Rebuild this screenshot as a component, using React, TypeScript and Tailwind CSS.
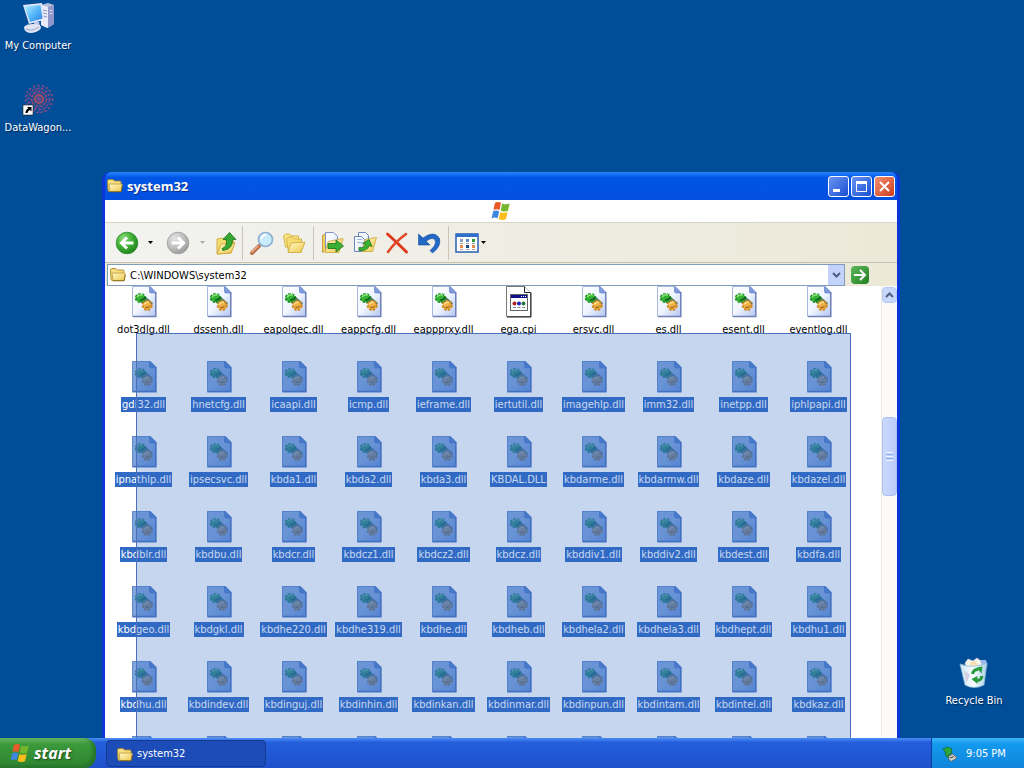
import type { ReactNode } from 'react'

type FileEntry = { name: string; kind?: 'dll' | 'cpi' }

const TOP_ROW: FileEntry[] = [
  { name: 'dot3dlg.dll' },
  { name: 'dssenh.dll' },
  { name: 'eapolqec.dll' },
  { name: 'eappcfg.dll' },
  { name: 'eappprxy.dll' },
  { name: 'ega.cpi', kind: 'cpi' },
  { name: 'ersvc.dll' },
  { name: 'es.dll' },
  { name: 'esent.dll' },
  { name: 'eventlog.dll' },
]

const SELECTED = [
  'gdi32.dll', 'hnetcfg.dll', 'icaapi.dll', 'icmp.dll', 'ieframe.dll', 'iertutil.dll', 'imagehlp.dll', 'imm32.dll', 'inetpp.dll', 'iphlpapi.dll',
  'ipnathlp.dll', 'ipsecsvc.dll', 'kbda1.dll', 'kbda2.dll', 'kbda3.dll', 'KBDAL.DLL', 'kbdarme.dll', 'kbdarmw.dll', 'kbdaze.dll', 'kbdazel.dll',
  'kbdblr.dll', 'kbdbu.dll', 'kbdcr.dll', 'kbdcz1.dll', 'kbdcz2.dll', 'kbdcz.dll', 'kbddiv1.dll', 'kbddiv2.dll', 'kbdest.dll', 'kbdfa.dll',
  'kbdgeo.dll', 'kbdgkl.dll', 'kbdhe220.dll', 'kbdhe319.dll', 'kbdhe.dll', 'kbdheb.dll', 'kbdhela2.dll', 'kbdhela3.dll', 'kbdhept.dll', 'kbdhu1.dll',
  'kbdhu.dll', 'kbdindev.dll', 'kbdinguj.dll', 'kbdinhin.dll', 'kbdinkan.dll', 'kbdinmar.dll', 'kbdinpun.dll', 'kbdintam.dll', 'kbdintel.dll', 'kbdkaz.dll',
]

const COLUMNS = 10

/* ---------- shared gradients ---------- */

function Gradients() {
  return (
    <svg width="0" height="0" className="absolute" aria-hidden="true">
      <defs>
        <linearGradient id="page" x1="0" y1="0" x2="1" y2="1">
          <stop offset="0" stopColor="#ffffff" />
          <stop offset="0.5" stopColor="#f0f5ff" />
          <stop offset="1" stopColor="#b4c6f2" />
        </linearGradient>
        <linearGradient id="folder" x1="0" y1="0" x2="1" y2="1">
          <stop offset="0" stopColor="#fffbc8" />
          <stop offset="1" stopColor="#edc64c" />
        </linearGradient>
        <radialGradient id="green" cx="0.35" cy="0.3" r="0.8">
          <stop offset="0" stopColor="#8fdc7c" />
          <stop offset="0.5" stopColor="#3fae34" />
          <stop offset="1" stopColor="#1d7d1c" />
        </radialGradient>
        <radialGradient id="gray" cx="0.35" cy="0.3" r="0.8">
          <stop offset="0" stopColor="#e4e4e4" />
          <stop offset="0.6" stopColor="#b9b9b9" />
          <stop offset="1" stopColor="#929292" />
        </radialGradient>
        <linearGradient id="screen" x1="0" y1="0" x2="1" y2="1">
          <stop offset="0" stopColor="#b8f0ff" />
          <stop offset="0.5" stopColor="#58b8fa" />
          <stop offset="1" stopColor="#2a80e4" />
        </linearGradient>
        <linearGradient id="bin" x1="0" y1="0" x2="1" y2="0">
          <stop offset="0" stopColor="#c9e6f4" />
          <stop offset="0.5" stopColor="#fbfdff" />
          <stop offset="1" stopColor="#a9cfea" />
        </linearGradient>
      </defs>
    </svg>
  )
}

/* ---------- icons ---------- */

function DllIcon({ selected = false }: { selected?: boolean }) {
  return (
    <svg viewBox="0 0 32 32" className="size-8 shrink-0" aria-hidden="true">
      <path d="M4.500 0.500h18l5 5v25h-23z" fill="url(#page)" stroke="#a9b8e0" />
      <path d="M27.800 6v24.500H5" fill="none" stroke="#6f80b6" strokeWidth="1.500" />
      <path d="M21.500 0.500l6.500 6.500h-5q-1.500 0-1.500-1.500z" fill="#7d9ade" stroke="#5c78be" strokeWidth="0.600" />
      <g>
        <path d="M9 10l9 1 7 6-3 4-9-4z" fill="#1d4a22" opacity="0.700" />
        <ellipse cx="12.500" cy="12" rx="4.800" ry="4" fill="#35b235" stroke="#1f9427" strokeWidth="2" strokeDasharray="2.400 1.200" />
        <path d="M9 11q2-3 6-2" fill="none" stroke="#90e67b" strokeWidth="1.500" />
        <path d="M12 14q4 0 5-3" fill="none" stroke="#135d1c" strokeWidth="1.500" />
        <circle cx="19.200" cy="19.500" r="4.400" fill="#f0b048" stroke="#d08c24" strokeWidth="2.200" strokeDasharray="2.400 1.300" />
        <path d="M16 18.500q2-3 5-2" fill="none" stroke="#ffe28a" strokeWidth="1.500" />
        <path d="M17.500 21q2 1.500 4-1" fill="none" stroke="#9a6418" strokeWidth="1.200" />
      </g>
      {selected && <path d="M4 0h18.500l6 6v25.500H4z" fill="#316ac5" fillOpacity="0.600" />}
    </svg>
  )
}

function CpiIcon() {
  return (
    <svg viewBox="0 0 32 32" className="size-8 shrink-0" aria-hidden="true">
      <path d="M3.500 0.500h18l6 6v24h-24z" fill="#fff" stroke="#777" />
      <path d="M28 6.500v24.500H4" fill="none" stroke="#222" />
      <path d="M21.500 0.500v6h6" fill="#fff" stroke="#222" />
      <rect x="7.500" y="8.500" width="17" height="16" fill="#fff" stroke="#666" />
      <rect x="8" y="9" width="16" height="3" fill="#10108c" />
      <path d="M18 10.500h1M20 10.500h1M22 10.500h1" stroke="#fff" />
      <circle cx="11.500" cy="17.500" r="2" fill="#b02020" />
      <circle cx="16" cy="17.500" r="2" fill="#2020b8" />
      <circle cx="20.500" cy="17.500" r="2" fill="#207840" />
      <path d="M10 21.500h12" stroke="#888" strokeDasharray="3 1.500" />
    </svg>
  )
}

function FolderIcon({ className = 'size-4' }: { className?: string }) {
  return (
    <svg viewBox="0 0 16 16" className={`${className} shrink-0`} aria-hidden="true">
      <path d="M0.500 3.500q0-2 1.500-2h4l1.500 1.500h5.500q1 0 1 1V12q0 1.500-1 1.500H2.500Q1 13.500 1 12z" fill="#f7df80" stroke="#a8872a" strokeWidth="0.900" />
      <path d="M2 6h12.500l.8.800-1.300 6.700H3z" fill="url(#folder)" stroke="#b8973a" strokeWidth="0.800" />
      <path d="M2.800 13.800h11.400l1.100-6" fill="none" stroke="#7c6110" strokeWidth="0.800" />
    </svg>
  )
}

function WindowsFlag({ className = 'size-5' }: { className?: string }) {
  return (
    <svg viewBox="0 0 20 20" className={`${className} shrink-0`} aria-hidden="true">
      <path d="M4 1.800Q6.700 0 10 1.800L8.500 9Q5.500 7.400 2.400 9z" fill="#ea5a29" />
      <path d="M11.200 2.400q3.300 1.700 7.500.200L17 9.800q-4 1.500-7.300-.300z" fill="#76b82c" />
      <path d="M2.100 10.300q3.100-1.700 6.100 0L6.600 17.300Q3.700 15.900.6 17.400z" fill="#3f86e0" />
      <path d="M9.400 10.900q3.300 1.700 7.300.200L15 18.200q-4 1.500-7.300-.300z" fill="#fbbd1c" />
    </svg>
  )
}

function RoundArrow({ forward = false }: { forward?: boolean }) {
  return (
    <svg viewBox="0 0 24 24" className="size-6" aria-hidden="true">
      <circle cx="12" cy="12" r="10.800" fill={forward ? 'url(#gray)' : 'url(#green)'} stroke={forward ? '#9c9c9c' : '#2a8a28'} strokeWidth="0.800" />
      <path
        d={forward ? 'M5.500 12h12M12 6.500l5.500 5.500-5.500 5.500' : 'M18.500 12h-12M12 6.500L6.500 12l5.500 5.500'}
        fill="none"
        stroke="#fff"
        strokeWidth="3"
      />
    </svg>
  )
}

function UpFolderIcon() {
  return (
    <svg viewBox="0 0 24 24" className="size-6" aria-hidden="true">
      <path d="M3 8l6-1 2 2h7l2 1-3 12-14 1z" fill="#f5dc70" stroke="#c6a230" strokeWidth="0.800" />
      <path d="M3 23l4-10 14-1-4 10z" fill="url(#folder)" stroke="#c6a230" strokeWidth="0.800" />
      <path d="M8 17.500q5-1 4.500-9H9L15.500 1.500 22 8.500h-3.500Q19 18 9 19.500z" fill="#36a832" stroke="#1b731d" strokeWidth="0.800" />
    </svg>
  )
}

function SearchIcon() {
  return (
    <svg viewBox="0 0 24 24" className="size-6" aria-hidden="true">
      <path d="M2 22l7-7" stroke="#b9704a" strokeWidth="4" strokeLinecap="round" />
      <path d="M2 21l6-6" stroke="#e9b294" strokeWidth="1.500" strokeLinecap="round" />
      <circle cx="15.500" cy="8.500" r="7" fill="#c9ecfb" stroke="#8fb0d2" strokeWidth="1.700" />
      <path d="M11 8q1-4 5-4.500" fill="none" stroke="#fff" strokeWidth="2" />
    </svg>
  )
}

function FoldersIcon() {
  return (
    <svg viewBox="0 0 24 24" className="size-6" aria-hidden="true">
      <path d="M1.500 5l2-2h4l2 2h7v11h-13z" fill="#f8e584" stroke="#d0ae40" strokeWidth="0.900" />
      <path d="M4.500 8l2-2h4l2 2h7v13h-13z" fill="#f5dc70" stroke="#d0ae40" strokeWidth="0.900" />
      <path d="M6 21.500L9 12l14-1-4 10.500z" fill="url(#folder)" stroke="#d0ae40" strokeWidth="0.900" />
    </svg>
  )
}

function MoveToIcon() {
  return (
    <svg viewBox="0 0 24 24" className="size-6" aria-hidden="true">
      <path d="M1.500 4.500l3-2v17l-3 2z" fill="#f2cf58" stroke="#c08a3a" strokeWidth="0.800" />
      <path d="M4.500 1.500h8l4 4v13h-12z" fill="url(#page)" stroke="#7d93c4" />
      <path d="M4 21.500l3-11 15-3-4 14z" fill="url(#folder)" stroke="#d0ae40" strokeWidth="0.900" />
      <path d="M7 12.500h8V9l7.500 6-7.500 6v-3.500H7z" fill="#3bb034" stroke="#1b731d" strokeWidth="0.800" />
    </svg>
  )
}

function CopyToIcon() {
  return (
    <svg viewBox="0 0 24 24" className="size-6" aria-hidden="true">
      <path d="M5.500 1.500h7l3 3v11h-10z" fill="url(#page)" stroke="#6e88bf" />
      <path d="M1.500 5.500h7l3 3v12h-10z" fill="url(#page)" stroke="#6e88bf" />
      <path d="M4 8.500h5M4 11.500h5" stroke="#9db3e4" />
      <path d="M9 20.500l3-12 11.500-2-4 14z" fill="url(#folder)" stroke="#d0ae40" strokeWidth="0.900" />
      <path d="M6 16.500q5 1 6.500-3.500L9.500 12.500 16 8.500l3 7-2.700-1Q14 20.500 6 19.500z" fill="#3bb034" stroke="#1b731d" strokeWidth="0.800" />
    </svg>
  )
}

function DeleteIcon() {
  return (
    <svg viewBox="0 0 24 24" className="size-6" aria-hidden="true">
      <path d="M2.500 3q9 8 19 18" fill="none" stroke="#e03a1e" strokeWidth="3" strokeLinecap="round" />
      <path d="M21 3Q10 11 3 21" fill="none" stroke="#e4462a" strokeWidth="2.600" strokeLinecap="round" />
    </svg>
  )
}

function UndoIcon() {
  return (
    <svg viewBox="0 0 24 24" className="size-6" aria-hidden="true">
      <path d="M1.500 3v11h11.500L9.200 10.200Q15 5.500 18 9q2 5-5 10.500l2.500 2.500Q25 15 22.300 7 17-1 6 7z" fill="#2368c4" stroke="#174f9f" strokeWidth="0.600" />
    </svg>
  )
}

function ViewsIcon() {
  return (
    <svg viewBox="0 0 24 20" className="h-5 w-6" aria-hidden="true">
      <rect x="1" y="1" width="22" height="18" fill="#fff" stroke="#2a5fae" strokeWidth="1.500" />
      <rect x="1" y="1" width="22" height="3" fill="#2f6fcd" />
      <path d="M5 6h3v3H5z" fill="#8a9cc0" />
      <path d="M11 6h3v3h-3z" fill="#5c86c8" />
      <path d="M17 6h3v3h-3z" fill="#2b9a37" />
      <path d="M5 12h3v3H5zM17 12h3v3h-3z" fill="#ea8a48" />
      <path d="M11 12h3v3h-3z" fill="#174582" />
      <path d="M5 10.500h3M11 10.500h3M17 10.500h3M5 16.500h3M11 16.500h3M17 16.500h3" stroke="#8c8c8c" strokeWidth="0.800" />
    </svg>
  )
}

function ComputerIcon() {
  return (
    <svg viewBox="0 0 32 32" className="size-8" aria-hidden="true">
      <path d="M19 3l7-2 6 2v19l-7 4-6-3z" fill="#b8bede" />
      <path d="M19 3l7 2v21l-7-3z" fill="#e9ebf8" />
      <path d="M21 8l4 1M21 11l4 1M21 14l4 1" stroke="#8d96c4" />
      <path d="M26 5l6-2v19l-6 4z" fill="#8f97c8" />
      <path d="M27.500 9l3-1M27.500 12l3-1" stroke="#dfe3f6" />
      <path d="M1 3l19-2 2 17-15 4z" fill="#e4e8f6" />
      <path d="M2.500 4.500L18.500 3l2 13.500-12.500 3.500z" fill="url(#screen)" />
      <path d="M12 20h5l1 4h-6z" fill="#c0c7e4" />
      <path d="M2 25q2-3 9-3 7 0 8 3 0 4-9 6-8 0-8-6z" fill="#e0e4f3" />
      <path d="M4 27q6 3 13-2" fill="none" stroke="#9aa3cd" />
    </svg>
  )
}

function DataWagonIcon() {
  return (
    <svg viewBox="0 0 32 32" className="size-8" aria-hidden="true">
      <g fill="none" stroke="#7b4a8a" strokeWidth="1.600">
        <circle cx="17" cy="15" r="4" stroke="#b5504c" strokeWidth="2" />
        <circle cx="17" cy="15" r="7.500" strokeDasharray="3 1.200" stroke="#96486c" />
        <circle cx="17" cy="15" r="10.500" strokeDasharray="3 1.600" stroke="#6f4a92" />
        <circle cx="17" cy="15" r="13.500" strokeDasharray="2 2.400" stroke="#94507c" />
        <path d="M17 1v28M3 15h28M7 5l20 20M27 5L7 25M4 10l26 10M30 10L4 20M12 2l10 26M22 2L12 28" strokeWidth="0.700" />
      </g>
      <rect x="1" y="21" width="10" height="10" fill="#fff" stroke="#222" strokeWidth="0.600" />
      <path d="M3.500 29q0-4 3-4.500L5 23h4.500v4.500L8 26q-2 .500-2.500 3z" fill="#000" />
    </svg>
  )
}

function RecycleBinIcon() {
  return (
    <svg viewBox="0 0 32 32" className="size-8" aria-hidden="true">
      <path d="M7 6l3-4 5 2 4-3 4 3 5 1 1 4-21 1z" fill="#f7f4ea" stroke="#c9c5d8" strokeWidth="0.700" />
      <path d="M22 3l6 0 1 5-5 1z" fill="#9db9ec" />
      <path d="M2 7q13 5 27-1l-3 22q-10 5-19 0z" fill="url(#bin)" stroke="#86b6d6" strokeWidth="0.800" />
      <path d="M6 13l6 5-4 8z" fill="#d5cfe4" />
      <path d="M12 6l5-2 3 4-7 1z" fill="#f3dcae" />
      <g fill="none" stroke="#279a3a" strokeWidth="3">
        <path d="M14.500 17q1-5 6-4.500" />
        <path d="M24 19q-1 5-6 4.500" />
      </g>
      <path d="M18.500 10.500l6-1-1 7zM19.500 27l-6-5 6-3z" fill="#279a3a" />
    </svg>
  )
}

function TrayIcon() {
  return (
    <svg viewBox="0 0 16 16" className="size-4" aria-hidden="true">
      <path d="M5 11l6-3 4 4-6 3.500z" fill="#cfd0c8" stroke="#5f6260" strokeWidth="0.800" />
      <path d="M8 12l4-1.500" stroke="#444" />
      <path d="M1 3l5-2 4 2-1 5-3 1 1 3L3 9l1-2z" fill="#2ea836" stroke="#14641f" strokeWidth="0.700" />
    </svg>
  )
}

function CaretDown({ faded = false }: { faded?: boolean }) {
  return (
    <svg viewBox="0 0 5 3" className="h-[3px] w-[5px] shrink-0" aria-hidden="true">
      <path d="M0 0h5L2.500 3z" fill={faded ? '#b0aea4' : '#000'} />
    </svg>
  )
}

/* ---------- pieces ---------- */

function ToolButton({ label, children }: { label: string; children: ReactNode }) {
  return (
    <button type="button" aria-label={label} className="flex h-8 w-8 shrink-0 items-center justify-center">
      {children}
    </button>
  )
}

function Separator() {
  return <div className="h-[34px] w-px shrink-0 bg-[#c9c6b8]" />
}

function FileItem({ file, selected = false }: { file: FileEntry; selected?: boolean }) {
  return (
    <li className="flex h-[75px] flex-col items-center gap-1">
      {file.kind === 'cpi' ? <CpiIcon /> : <DllIcon selected={selected} />}
      {file.name && (
        <span className={selected ? 'bg-[#316ac5] px-px leading-[15px] text-white' : 'px-px leading-[15px] text-black'}>
          {file.name}
        </span>
      )}
    </li>
  )
}

function DesktopIcon({ label, children }: { label: string; children: ReactNode }) {
  return (
    <button type="button" className="flex w-[76px] flex-col items-center gap-1 text-white">
      {children}
      <span className="leading-[15px] [text-shadow:1px_1px_1px_#00285a]">{label}</span>
    </button>
  )
}

function TitleBar() {
  return (
    <div className="flex h-7 shrink-0 items-center gap-1 rounded-t-md bg-linear-to-b from-[#2a86fb] via-[#0055e5] via-20% to-[#0350e0] pr-0.5 pl-0.5">
      <FolderIcon />
      <h1 className="flex-1 font-['Open_Sans',sans-serif] text-[13px] leading-5 font-bold text-white [text-shadow:1px_1px_0_#0a2f8c]">
        system32
      </h1>
      <div className="flex gap-0.5">
        <button type="button" aria-label="Minimize" className="flex size-[21px] items-end rounded-[3px] border border-white bg-linear-to-br from-[#6a93f0] to-[#1a4ed2] p-1">
          <span className="h-[3px] w-[7px] bg-white" />
        </button>
        <button type="button" aria-label="Maximize" className="flex size-[21px] items-center justify-center rounded-[3px] border border-white bg-linear-to-br from-[#6a93f0] to-[#1a4ed2]">
          <span className="size-[11px] border border-t-[3px] border-white" />
        </button>
        <button type="button" aria-label="Close" className="flex size-[21px] items-center justify-center rounded-[3px] border border-white bg-linear-to-br from-[#ee8f70] to-[#cf3a14]">
          <svg viewBox="0 0 11 11" className="size-[11px]" aria-hidden="true">
            <path d="M1 1l9 9M10 1l-9 9" stroke="#fff" strokeWidth="2" />
          </svg>
        </button>
      </div>
    </div>
  )
}

function Toolbar() {
  return (
    <div className="flex h-[41px] shrink-0 items-center border-y border-t-[#d8d5c8] border-b-[#c4c1b2] bg-linear-to-r from-[#f2f2f0] to-[#ece9d8] pl-1.5">
      <ToolButton label="Back">
        <RoundArrow />
      </ToolButton>
      <button type="button" aria-label="Back history" className="flex h-8 w-[15px] items-center justify-center">
        <CaretDown />
      </button>
      <div className="flex w-9 justify-end">
        <ToolButton label="Forward">
          <RoundArrow forward />
        </ToolButton>
      </div>
      <button type="button" aria-label="Forward history" className="flex h-8 w-4 items-center justify-center">
        <CaretDown faded />
      </button>
      <ToolButton label="Up">
        <UpFolderIcon />
      </ToolButton>
      <Separator />
      <div className="flex px-[3px]">
        <ToolButton label="Search">
          <SearchIcon />
        </ToolButton>
        <ToolButton label="Folders">
          <FoldersIcon />
        </ToolButton>
      </div>
      <Separator />
      <div className="flex px-[3px]">
        <ToolButton label="Move to">
          <MoveToIcon />
        </ToolButton>
        <ToolButton label="Copy to">
          <CopyToIcon />
        </ToolButton>
        <ToolButton label="Delete">
          <DeleteIcon />
        </ToolButton>
        <ToolButton label="Undo">
          <UndoIcon />
        </ToolButton>
      </div>
      <Separator />
      <button type="button" aria-label="Views" className="flex h-8 items-center gap-0.5 pl-1.5">
        <ViewsIcon />
        <CaretDown />
      </button>
    </div>
  )
}

function AddressBar() {
  return (
    <div className="flex h-[23px] shrink-0 items-end gap-1.5 bg-[#ece9d8] pr-7 pl-0.5">
      <div className="flex h-[22px] flex-1 items-center gap-1 border border-[#7f9db9] bg-white pl-0.5">
        <FolderIcon />
        <input aria-label="Address" defaultValue="C:\WINDOWS\system32" className="min-w-0 flex-1 bg-transparent pt-0.5 text-black outline-none" />
        <button type="button" aria-label="Show addresses" className="flex h-5 w-4 items-center justify-center bg-[#c3d3fb]">
          <svg viewBox="0 0 9 6" className="h-1.5 w-[9px]" aria-hidden="true">
            <path d="M1 1l3.500 3.500L8 1" fill="none" stroke="#4d6185" strokeWidth="2" />
          </svg>
        </button>
      </div>
      <div className="flex h-[22px] items-center">
        <button type="button" aria-label="Go" className="flex size-[18px] items-center justify-center rounded-sm bg-linear-to-br from-[#5cb85a] to-[#1f7f22]">
          <svg viewBox="0 0 14 14" className="size-3.5" aria-hidden="true">
            <path d="M1 7h11M7 2l5 5-5 5" fill="none" stroke="#fff" strokeWidth="2" />
          </svg>
        </button>
      </div>
    </div>
  )
}

function ScrollBar() {
  return (
    <div className="flex w-4 shrink-0 flex-col border-l border-[#eeede5] bg-[#fbfaf6]">
      <button type="button" aria-label="Scroll up" className="mt-px flex h-4 shrink-0 items-center justify-center rounded-sm border border-[#b4c8f6] bg-[#c8d6fb]">
        <svg viewBox="0 0 9 6" className="h-1.5 w-[9px]" aria-hidden="true">
          <path d="M1 5l3.500-3.500L8 5" fill="none" stroke="#4d6185" strokeWidth="2" />
        </svg>
      </button>
      <div className="basis-[114px]" />
      <div className="flex h-[79px] shrink-0 flex-col items-center justify-center gap-px rounded-sm border border-[#aabff2] bg-linear-to-r from-[#cbd9fd] to-[#b9cbf8]">
        <span className="h-px w-[7px] bg-[#eef4fe]" />
        <span className="h-px w-[7px] bg-[#8cb0f8]" />
        <span className="h-px w-[7px] bg-[#eef4fe]" />
        <span className="h-px w-[7px] bg-[#8cb0f8]" />
        <span className="h-px w-[7px] bg-[#eef4fe]" />
      </div>
    </div>
  )
}

function ExplorerWindow() {
  return (
    <section className="absolute top-[172px] right-[124px] bottom-0 left-[102px] flex flex-col overflow-hidden rounded-t-lg border-x-[3px] border-[#0a35d8] bg-[#0a35d8]">
      <TitleBar />
      <div className="flex h-[22px] shrink-0 items-center justify-center bg-white">
        <WindowsFlag />
      </div>
      <Toolbar />
      <AddressBar />
      <div className="flex min-h-0 flex-1 bg-white">
        <div className="relative flex-1 overflow-hidden pl-px">
          <ul className="grid grid-cols-[repeat(10,75px)]">
            {TOP_ROW.map((file) => (
              <FileItem key={file.name} file={file} />
            ))}
            {SELECTED.map((name) => (
              <FileItem key={name} file={{ name }} selected />
            ))}
            {/* next row, only its top edge shows above the taskbar */}
            {Array.from({ length: COLUMNS }, (_, i) => (
              <FileItem key={i} file={{ name: '' }} selected />
            ))}
          </ul>
          {/* drag selection */}
          <div className="absolute top-[47px] bottom-0 left-[31px] w-[715px] border border-b-0 border-[#4a70b8] bg-[#316ac5]/28" />
        </div>
        <ScrollBar />
      </div>
    </section>
  )
}

function Taskbar() {
  return (
    <footer className="flex h-[30px] shrink-0 items-stretch bg-linear-to-b from-[#4a8cf6] via-[#245edb] via-15% to-[#1f51cc] text-white">
      <button
        type="button"
        className="flex w-24 items-center gap-1 rounded-r-xl bg-linear-to-b from-[#6cb867] via-[#3c9a3c] via-20% to-[#2f8430] pl-2.5 font-['Open_Sans',sans-serif] text-[16px] leading-6 font-bold italic shadow-[inset_-3px_-2px_4px_#23702a] [text-shadow:1px_1px_2px_#1b4a1c]"
      >
        <WindowsFlag />
        start
      </button>
      <div className="flex flex-1 pt-0.5 pb-px pl-2.5">
        <button type="button" className="flex w-40 items-center gap-1 rounded-sm border border-[#163a94] bg-[#1c4cb8] pt-0.5 pl-2.5">
          <FolderIcon />
          system32
        </button>
      </div>
      <div className="flex w-[93px] items-center gap-2 border-l border-[#0b3f9c] bg-linear-to-b from-[#3ab4f8] via-[#139aee] via-20% to-[#1084dc] pt-0.5 pl-2.5">
        <TrayIcon />
        <time>9:05 PM</time>
      </div>
    </footer>
  )
}

export default function App() {
  return (
    <div className="flex h-screen flex-col overflow-hidden bg-[#004e98] font-['DejaVu_Sans_Condensed','DejaVu_Sans',sans-serif] text-[11px]">
      <Gradients />
      <main className="relative min-h-0 flex-1">
        <div className="flex flex-col items-start gap-[31px] pt-0.5">
          <DesktopIcon label="My Computer">
            <ComputerIcon />
          </DesktopIcon>
          <DesktopIcon label="DataWagon...">
            <DataWagonIcon />
          </DesktopIcon>
        </div>
        <div className="absolute right-3 bottom-[30px]">
          <DesktopIcon label="Recycle Bin">
            <RecycleBinIcon />
          </DesktopIcon>
        </div>
        <ExplorerWindow />
      </main>
      <Taskbar />
    </div>
  )
}
